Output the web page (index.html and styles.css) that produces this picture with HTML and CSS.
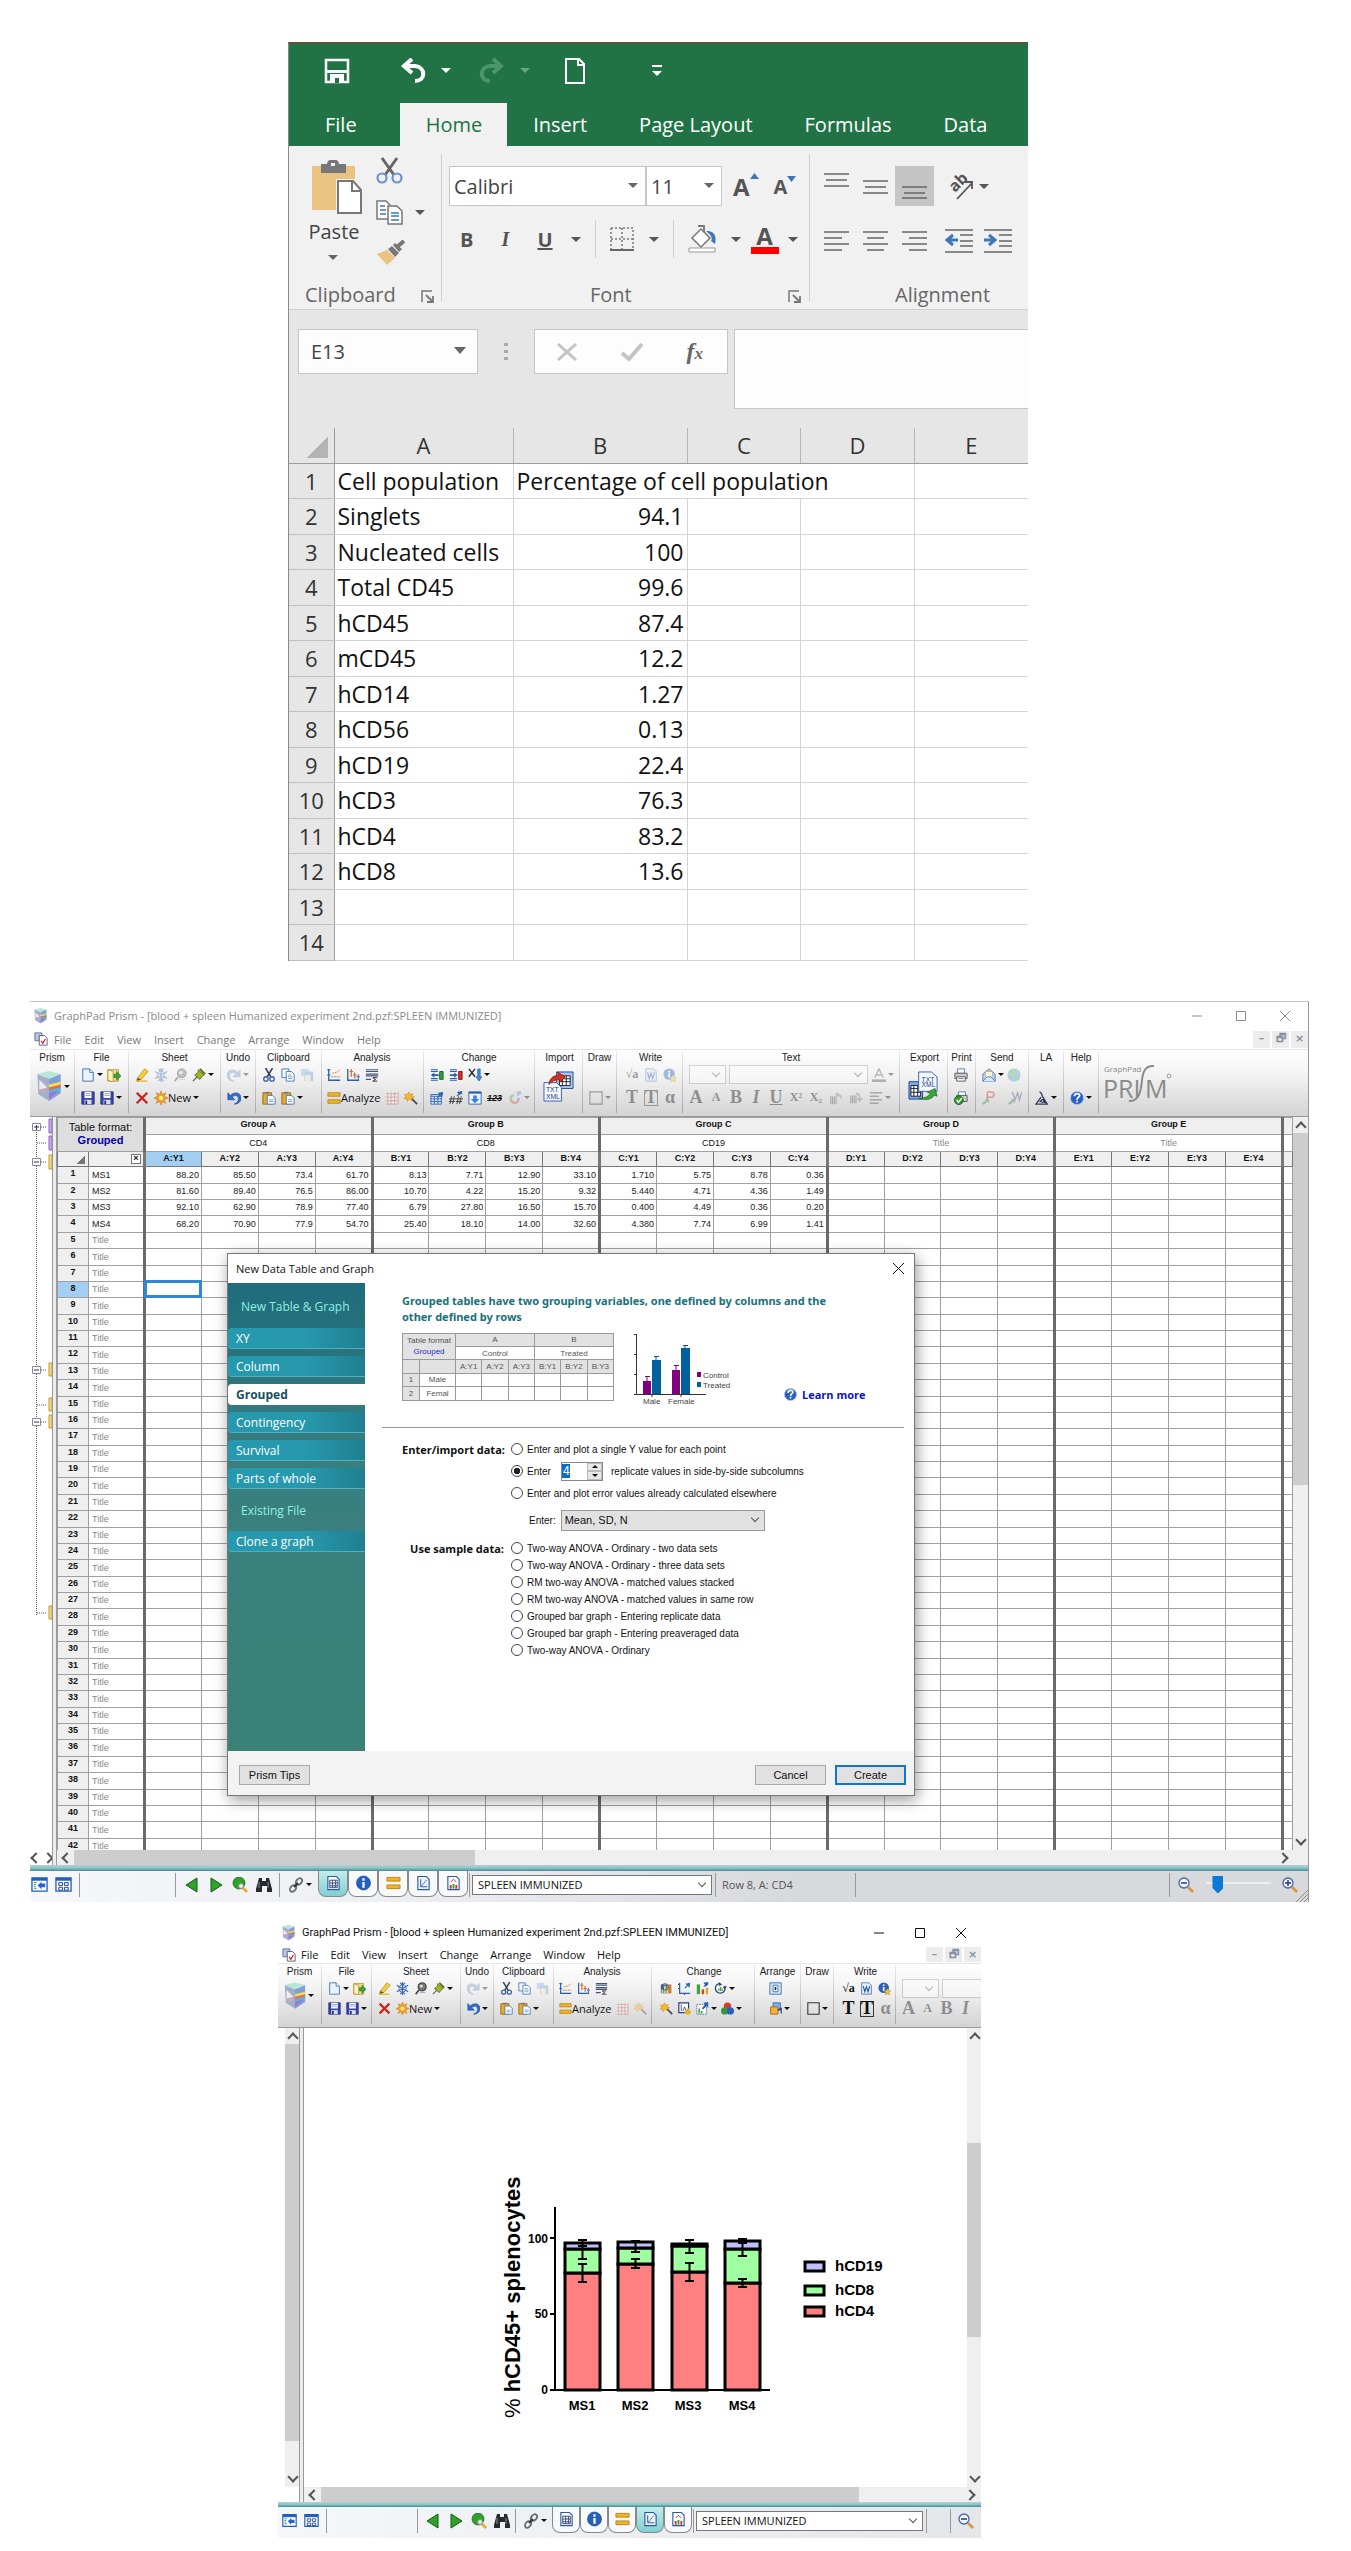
FILE: index.html
```html
<!DOCTYPE html>
<html lang="en">
<head>
  <meta charset="UTF-8"/>
  <meta name="viewport" content="width=device-width, initial-scale=1.0"/>
  <title>Cell populations – Excel and GraphPad Prism</title>
  <link rel="stylesheet" href="styles.css">
</head>
<body>
  <!-- Shared icons -->
  <svg class="sprite" aria-hidden="true">
    <symbol id="i-prism" viewBox="0 0 26 32"><path d="M1 3 13 8v23L2 24z" fill="#9fb0cc"/><path d="M13 8 25 3v20L13 31z" fill="#7fa0d8"/><path d="M1 3 13 0l12 3-12 5z" fill="#b9e6d6"/><path d="M13 14 25 11v4l-12 2z" fill="#f4e04a"/><path d="M13 17 25 14v4l-12 2z" fill="#e86a5a"/><path d="M13 20 25 17v3l-12 3z" fill="#3fc0e8"/><path d="m3 8 8 6-1 8-7 0z" fill="#c9a9b4"/><path d="m3 9 8 8-8 2z" fill="#e9eef6"/><path d="m13 23 10-3-10 9z" fill="#b06ad0"/></symbol>
    <symbol id="i-mdi" viewBox="0 0 16 16"><path d="M1 1h8v9H1z" fill="#b9c6dc" stroke="#5d6f95"/><path d="M6 4h6l3 3v8H6z" fill="#fff" stroke="#4a5878"/><path d="m8 10 2 3 3-5" fill="none" stroke="#d02020" stroke-width="1.5"/></symbol>
    <symbol id="i-doc" viewBox="0 0 16 16"><path d="M2 1h8l4 4v10H2z" fill="#e9f2fd" stroke="#3767ad"/><path d="M10 1v4h4" fill="#fff" stroke="#3767ad"/></symbol>
    <symbol id="i-open" viewBox="0 0 16 16"><path d="M1 2h12v13H1z" fill="#f6e39a" stroke="#b3922b"/><path d="m1 2 6 2v12l-6-2z" fill="#fff3c2" stroke="#b3922b"/><path d="M8 7h3V4l5 5-5 5v-3H8z" fill="#3da53a" stroke="#1c6a1c" stroke-width=".7"/></symbol>
    <symbol id="i-save" viewBox="0 0 16 16"><path d="M1 1h14v14H1z" fill="#3647a8" stroke="#1e2a78"/><path d="M4 1h8v7H4z" fill="#fff"/><path d="M5 3h6M5 5h6" stroke="#8a95c8"/><path d="M4 10h8v5H4z" fill="#d8dcee"/><path d="M5 11h2v4H5z" fill="#1e2a78"/></symbol>
    <symbol id="i-pencil" viewBox="0 0 16 16"><path d="m3 11 8-10 4 3-8 9-5 1z" fill="#f7cf3c" stroke="#a9811c" stroke-width=".8"/><path d="m3 11 4 2-5 2z" fill="#6b4a1a"/><path d="M1 15h13" stroke="#e8b41c" stroke-width="1.5"/></symbol>
    <symbol id="i-snow" viewBox="0 0 16 16"><path d="M8 0v16M1 4l14 8M1 12l14-8M5 1l3 3 3-3M5 15l3-3 3 3" fill="none" stroke="#3767ad" stroke-width="1.4"/><circle cx="8" cy="8" r="4.500" fill="none" stroke="#3767ad"/></symbol>
    <symbol id="i-lens" viewBox="0 0 16 16"><circle cx="10" cy="6" r="5" fill="#777" stroke="#222"/><circle cx="9" cy="5" r="2" fill="#ddd"/><path d="m6 10-4 5" stroke="#444" stroke-width="2"/><path d="M7 13h7" stroke="#7fa5d8"/></symbol>
    <symbol id="i-pin" viewBox="0 0 16 16"><path d="m7 2 7 6-2 1-3 4-6-5 4-3z" fill="#a4b428" stroke="#5d6812"/><path d="m9 1 6 6" stroke="#5d6812" stroke-width="2"/><path d="m6 10-5 5" stroke="#666" stroke-width="1.500"/></symbol>
    <symbol id="i-x" viewBox="0 0 16 16"><path d="m2 2 12 12M14 2 2 14" stroke="#c8281e" stroke-width="2.800"/></symbol>
    <symbol id="i-sun" viewBox="0 0 16 16"><path d="m8 0 1.500 4 4-2-2 4 4.500 2-4.500 2 2 4-4-2L8 16l-1.500-4-4 2 2-4L0 8l4.500-2-2-4 4 2z" fill="#f5a21c" stroke="#c26a10" stroke-width=".6"/><circle cx="8" cy="8" r="2.500" fill="#ffe98a"/></symbol>
    <symbol id="i-undo" viewBox="0 0 16 16"><path d="M1 2v8h8L6 7c3-3 7-2 7 2 0 3-2 5-5 6 5 0 8-3 8-7 0-6-7-8-12-3z" fill="#2f6fd0" stroke="#15408f" stroke-width=".7"/></symbol>
    <symbol id="i-redo" viewBox="0 0 16 16"><path d="M15 2v8H7l3-3C7 4 3 5 3 9c0 3 2 5 5 6-5 0-8-3-8-7 0-6 7-8 12-3z" fill="#7b9fc8" stroke="#54779c" stroke-width=".7"/></symbol>
    <symbol id="i-cut" viewBox="0 0 16 16"><path d="m4 0 6 10M12 0 6 10" stroke="#33435e" stroke-width="1.800"/><circle cx="4.500" cy="12.500" r="2.500" fill="none" stroke="#3c5f9e" stroke-width="1.500"/><circle cx="11.500" cy="12.500" r="2.500" fill="none" stroke="#3c5f9e" stroke-width="1.500"/></symbol>
    <symbol id="i-copy" viewBox="0 0 16 16"><path d="M1 1h8v10H1z" fill="#eef5fd" stroke="#3f73b8"/><path d="M6 4h6l3 3v8H6z" fill="#fff" stroke="#3f73b8"/><path d="M8 8h4M8 10h5M8 12h5" stroke="#6c9ad4"/></symbol>
    <symbol id="i-dup" viewBox="0 0 16 16"><path d="M1 1h9v8H1z" fill="#8fb8e8"/><path d="M5 4h10v11H5z" fill="#6fa3df"/><path d="M6 8h6v7H6z" fill="#f4e9b0"/></symbol>
    <symbol id="i-paste" viewBox="0 0 16 16"><path d="M1 2h10v13H1z" fill="#e8a92e" stroke="#93620f"/><path d="M4 1h4v2H4z" fill="#777"/><path d="M6 5h6l3 3v7H6z" fill="#fff" stroke="#3f73b8"/><path d="M8 10h5M8 12h5" stroke="#6c9ad4"/></symbol>
    <symbol id="i-an1" viewBox="0 0 16 16"><path d="M2 1v13h13" fill="none" stroke="#2b5fae" stroke-width="1.500"/><path d="M5 10h10M6 6l5-1 4-3" fill="none" stroke="#d06a28" stroke-dasharray="2 1"/><path d="M0 2h4M0 8h4" stroke="#2b5fae"/></symbol>
    <symbol id="i-an2" viewBox="0 0 16 16"><path d="M2 1v13h13" fill="none" stroke="#2b5fae" stroke-width="1.500"/><path d="M6 1v9M4 4h4M10 5v7M8 8h4" stroke="#d06a28" stroke-width="1.400"/><path d="M14 7v7M12 10h4" stroke="#2b5fae"/></symbol>
    <symbol id="i-an3" viewBox="0 0 16 16"><path d="M1 2h14M1 4h14M1 7h14M1 9h14M1 13h6" stroke="#45567c" stroke-width="1.400"/><path d="M14 11H9l3 2-3 2h5" fill="none" stroke="#222"/></symbol>
    <symbol id="i-eq" viewBox="0 0 16 16"><path d="M1 2h14v4H1zM1 10h14v4H1z" fill="#f3b51e" stroke="#a8720e" stroke-width=".8"/></symbol>
    <symbol id="i-grid" viewBox="0 0 16 16"><path d="M1 1h14v14H1z" fill="#fff"/><path d="M1 3h14M1 7h14M1 11h14M1 15h14M3 1v14M7 1v14M11 1v14M15 1v14" stroke="#c86a6a" stroke-width="1.300"/></symbol>
    <symbol id="i-wand" viewBox="0 0 16 16"><path d="m7 7 8 8" stroke="#445" stroke-width="2"/><path d="m6 1 1 3 3-1-1 3 3 1-3 1 0 3-3-2-2 3-1-3-3 0 2-3-2-2 3 0z" fill="#f6b62c" stroke="#bc7d12" stroke-width=".5"/></symbol>
    <symbol id="i-ins" viewBox="0 0 16 16"><path d="M1 2h8M1 4h8M1 12h8M1 14h8" stroke="#2b5fae" stroke-width="1.400"/><path d="m1 8 4-3v2h5v2H5v2z" fill="#2b5fae"/><path d="M11 4h4v9h-4z" fill="#2fa040" stroke="#135e20"/></symbol>
    <symbol id="i-del" viewBox="0 0 16 16"><path d="M1 2h8M1 4h8M1 12h8M1 14h8" stroke="#2b5fae" stroke-width="1.400"/><path d="m10 8-4-3v2H1v2h5v2z" fill="#2b5fae"/><path d="M11 4h4v9h-4z" fill="#d83030" stroke="#7d1010"/></symbol>
    <symbol id="i-sort" viewBox="0 0 16 16"><path d="m1 1 7 9M8 1l-7 9" stroke="#222" stroke-width="1.500"/><path d="M11 1h3v9h2l-3.500 5L9 10h2z" fill="#3d8ae0" stroke="#1c559e" stroke-width=".6"/></symbol>
    <symbol id="i-tbl" viewBox="0 0 16 16"><path d="M1 4h12v11H1z" fill="#dceafb" stroke="#2b5fae"/><path d="M1 6h12M1 9h12M1 12h12M5 6v9M9 6v9" stroke="#2b5fae"/><path d="M15 1 9 2l2 2-3 3 1 1 3-3 2 2z" fill="#2360b8"/></symbol>
    <symbol id="i-hash" viewBox="0 0 16 16"><path d="M3 6 1 15M6 6 4 15M0 9h8M0 12h7M11 6l-2 9M14 6l-2 9M8 9h8M8 12h7" stroke="#333"/><path d="M15 0 9 1l2 2-3 3 3-1 3-2 1 1z" fill="#2360b8"/></symbol>
    <symbol id="i-down" viewBox="0 0 16 16"><path d="M1 1h14v14H1z" fill="#eef5fd" stroke="#2b5fae"/><path d="M1 1h14v2H1z" fill="#2b5fae"/><path d="M6 5h4v4h3l-5 5-5-5h3z" fill="#3d7fe0"/></symbol>
    <symbol id="i-wheel" viewBox="0 0 16 16"><path d="M7 3a6 6 0 0 0-5 8l3-1a3 3 0 0 1 2-4z" fill="#58b060"/><path d="M2 11a6 6 0 0 0 10 2l-2-2a3 3 0 0 1-5-1z" fill="#e05a48"/><path d="M12 13a6 6 0 0 0 1-6l-3 1a3 3 0 0 1 0 3z" fill="#8068d0"/><path d="M15 0 9 1l2 2-2 3 3-1 3-2z" fill="#5b8ed0"/></symbol>
    <symbol id="i-import" viewBox="0 0 32 32"><path d="M14 1h17v17H14z" fill="#a9c8f4" stroke="#22489a"/><path d="M17 5h11v10H17z" fill="#fff" stroke="#223"/><path d="M17 8h11M17 11h11M20 5v10M24 5v10" stroke="#223"/><path d="M1 12h13l5 5v14H1z" fill="#f4f9ff" stroke="#3e5fb4"/><path d="M6 14C7 6 13 4 16 5l-1-4 8 5-6 6v-3c-4 0-7 1-11 5z" fill="#d8301c" stroke="#7c1408" stroke-width=".7"/><text x="3" y="22" class="tiny">TXT</text><text x="3" y="29" class="tiny">XML</text></symbol>
    <symbol id="i-export" viewBox="0 0 32 32"><path d="M1 11h14v18H1z" fill="#7ea6e4" stroke="#22489a"/><path d="M3 15h10v11H3z" fill="#fff" stroke="#223"/><path d="M3 18h10M3 22h10M6 15v11M10 15v11" stroke="#223"/><path d="M11 1h13l6 5v15H11z" fill="#f4f9ff" stroke="#3e5fb4"/><path d="M11 28c8 0 10-2 12-5l-3-1 8-4 2 8-3-1c-2 4-8 6-16 3z" fill="#3aa63a" stroke="#17641c" stroke-width=".7"/><text x="14" y="11" class="tiny">TXT</text><text x="14" y="17" class="tiny">XML</text></symbol>
    <symbol id="i-word" viewBox="0 0 16 16"><path d="M2 1h9l3 3v11H2z" fill="#e6f0fc" stroke="#3f73b8"/><path d="m4 5 2 7 2-6 2 6 2-7" fill="none" stroke="#2257ac" stroke-width="1.400"/></symbol>
    <symbol id="i-infoadd" viewBox="0 0 16 16"><circle cx="7" cy="7" r="6.500" fill="#2b62b8"/><path d="M7 6v5M7 3v2" stroke="#fff" stroke-width="2"/><path d="m12 8 1 2.500 2.500.5-2 2 .5 3-2.500-1.500L9 16l.500-3-2-2 2.500-.5z" fill="#f4c22c" stroke="#a8720e" stroke-width=".5"/></symbol>
    <symbol id="i-info" viewBox="0 0 16 16"><circle cx="8" cy="8" r="7.500" fill="#2460be" stroke="#153d80" stroke-width=".6"/><path d="M8 7v6M8 3v2.500" stroke="#fff" stroke-width="2.400"/></symbol>
    <symbol id="i-print" viewBox="0 0 16 16"><path d="M4 1h8v5H4z" fill="#fff" stroke="#4c72b0"/><path d="M1 6h14v6H1z" fill="#c9cbd0" stroke="#555"/><path d="M3 10h10v5H3z" fill="#f4f4f4" stroke="#555"/><path d="M5 12h6" stroke="#777"/></symbol>
    <symbol id="i-printok" viewBox="0 0 16 16"><path d="M5 1h8v5H5z" fill="#fff" stroke="#4c72b0"/><path d="M3 5h12v7H3z" fill="#c9cbd0" stroke="#555"/><circle cx="5.500" cy="10.500" r="5" fill="#2f9a30" stroke="#14601a"/><path d="m3 10 2 3 4-5" fill="none" stroke="#fff" stroke-width="1.600"/></symbol>
    <symbol id="i-mail" viewBox="0 0 16 16"><path d="M1 7 8 1l7 6v8H1z" fill="#bcd8f4" stroke="#3f73b8"/><path d="M4 4h8v6l-4 2-4-2z" fill="#fff6d8" stroke="#b49a50" stroke-width=".7"/><path d="m1 15 5-5h4l5 5" fill="#d8e9fa" stroke="#3f73b8"/></symbol>
    <symbol id="i-globe" viewBox="0 0 16 16"><circle cx="8" cy="8" r="7.500" fill="#4c9ed8"/><path d="M4 2c4-2 8 0 7 3l-4 2-2 4-3-2zM10 9l4-1-2 5-3 1z" fill="#5fb04c"/></symbol>
    <symbol id="i-ppt" viewBox="0 0 16 16"><path d="M6 1v10M6 1h4c5 0 5 6 0 6H6" fill="none" stroke="#c8463a" stroke-width="2"/><path d="M0 14 5 10l-2-1h5v5l-2-2-4 4z" fill="#3d8a4c"/></symbol>
    <symbol id="i-wsend" viewBox="0 0 16 16"><path d="m5 1 3 9 3-8 2 8 3-9" fill="none" stroke="#54699e" stroke-width="1.800"/><path d="M0 14 5 10l-2-1h5v5l-2-2-4 4z" fill="#3d8a4c"/></symbol>
    <symbol id="i-la" viewBox="0 0 16 16"><path d="M5 1c3 0 2 3 4 6l5 8H1l6-8M6 12l3-3 2 4z" fill="none" stroke="#333a5c" stroke-width="1.500"/></symbol>
    <symbol id="i-help" viewBox="0 0 16 16"><circle cx="8" cy="8" r="7.500" fill="#2a5fc4" stroke="#b4c8ea"/><path d="M5 6c0-4 6-4 6-1 0 2-3 2-3 5M8 11v2" fill="none" stroke="#fff" stroke-width="2"/></symbol>
    <symbol id="i-color" viewBox="0 0 16 16"><path d="m3 11 5-10 5 10M5 8h6" fill="none" stroke="#666" stroke-width="1.600"/><path d="M0 13h16v3H0z" fill="#555"/></symbol>
    <symbol id="i-rotl" viewBox="0 0 16 16"><path d="M2 6v9M4 6v9M6 6v9M8 6v9" stroke="#555" stroke-width="1.300"/><path d="M7 4l3-3v2c4 0 5 3 5 8-1-3-2-5-5-5v2z" fill="#888"/></symbol>
    <symbol id="i-rotr" viewBox="0 0 16 16"><path d="M2 5v9M4 5v9M6 5v9M8 5v9" stroke="#555" stroke-width="1.300"/><path d="M8 2c4 0 5 2 5 6h3l-4 5-3-5h2c0-3-1-4-3-4z" fill="#888"/></symbol>
    <symbol id="i-align" viewBox="0 0 16 16"><path d="M1 2h14M1 6h10M1 10h14M1 14h10" stroke="#555" stroke-width="1.600"/></symbol>
    <symbol id="i-box" viewBox="0 0 16 16"><path d="M1 1h14v14H1z" fill="none" stroke="#333" stroke-width="1.300"/></symbol>
    <symbol id="i-type" viewBox="0 0 16 16"><path d="M1 3h8v11H1z" fill="#4b6fa8"/><path d="M3 14V9M6 14V5M9 14V7" stroke="#d8e080" stroke-width="2"/><path d="M10 3h4v11h-4z" fill="#d07a3a"/><circle cx="6" cy="6" r="4" fill="none" stroke="#444"/></symbol>
    <symbol id="i-axes" viewBox="0 0 16 16"><path d="M2 1v13h13M0 3h2M0 8h2M8 14v2" fill="none" stroke="#2b5fae" stroke-width="1.500"/><path d="m15 1-6 1 2 2-3 3 1 1 3-3 2 2z" fill="#2360b8"/></symbol>
    <symbol id="i-bars" viewBox="0 0 16 16"><path d="M1 3h4v12H1z" fill="#3aa63a"/><path d="M7 9h3v6H7z" fill="#d8402c"/><path d="M12 7h3v8h-3z" fill="#f0a020"/><path d="m15 0-6 1 2 2-2 3 4-1 2-2z" fill="#2360b8"/></symbol>
    <symbol id="i-spin" viewBox="0 0 16 16"><path d="M6 2a6 6 0 1 0 7 3" fill="none" stroke="#27406f" stroke-width="1.500"/><path d="m6 0 4 3-4 2zM11 6l5-1-3 4z" fill="#27406f"/><path d="M6 11V8M8 11V6M10 11V8" stroke="#3aa63a" stroke-width="1.400"/></symbol>
    <symbol id="i-addgraph" viewBox="0 0 16 16"><path d="M1 1h12v12H1z" fill="#fff" stroke="#2b3f80" stroke-width="1.500"/><path d="M4 3v8M6 11l2-5 2 5" fill="none" stroke="#2b3f80"/><path d="M8 11h8v3H8zM10.500 8h3v8h-3z" fill="#e8b41c"/></symbol>
    <symbol id="i-pick" viewBox="0 0 16 16"><path d="M1 3h12v12H1z" fill="#fff" stroke="#2b5fae" stroke-dasharray="2 1"/><path d="M4 14V8M7 14v-3" stroke="#3aa63a" stroke-width="2"/><path d="m15 0-6 1 2 2-4 5 2 1 4-4 2 2z" fill="#2360b8"/></symbol>
    <symbol id="i-balls" viewBox="0 0 16 16"><circle cx="8" cy="5" r="4.500" fill="#d83a28"/><circle cx="4.500" cy="11" r="4.500" fill="#2f9a38"/><circle cx="11.500" cy="11" r="4.500" fill="#2f60c0"/></symbol>
    <symbol id="i-center" viewBox="0 0 16 16"><path d="M1 1h14v14H1z" fill="#d4e6fa" stroke="#2b5fae"/><path d="M5 4h6v8H5z" fill="#fff" stroke="#2b5fae"/><path d="M7 6h2v4H7z" fill="#222"/></symbol>
    <symbol id="i-order" viewBox="0 0 16 16"><path d="M5 1h9v9H5z" fill="#7fb0ee" stroke="#2b5fae"/><path d="M2 6h9v9H2z" fill="#f3b13a" stroke="#9a6410"/><path d="m11 10 4-2v6" fill="none" stroke="#27406f" stroke-width="1.500"/></symbol>
    <symbol id="i-nav1" viewBox="0 0 18 18"><path d="M1 2h16v14H1z" fill="#fff" stroke="#1f5fc0" stroke-width="1.400"/><path d="M1 2h16v3H1z" fill="#1f5fc0"/><path d="M3 7h3M3 9h2M3 11h2M3 13h3" stroke="#2f8a4a"/><path d="m7 10 4-4v2h4v4h-4v2z" fill="#2360d8"/></symbol>
    <symbol id="i-nav2" viewBox="0 0 18 18"><path d="M1 2h16v14H1z" fill="#fff" stroke="#1f5fc0" stroke-width="1.400"/><path d="M1 2h16v3H1z" fill="#1f5fc0"/><path d="M4 7h4v3H4zM10 7h4v3h-4zM4 12h4v3H4zM10 12h4v3h-4z" fill="none" stroke="#1f3f90"/></symbol>
    <symbol id="i-left" viewBox="0 0 16 16"><path d="M13 1v14L2 8z" fill="#2fa22a" stroke="#125c12"/></symbol>
    <symbol id="i-right" viewBox="0 0 16 16"><path d="M3 1v14l11-7z" fill="#2fa22a" stroke="#125c12"/></symbol>
    <symbol id="i-find" viewBox="0 0 16 16"><circle cx="7" cy="6" r="6" fill="#2fa22a" stroke="#125c12" stroke-width=".7"/><path d="m9 9 6 6" stroke="#e0b030" stroke-width="2.800"/><circle cx="9" cy="9" r="2.500" fill="#e6f2e0" stroke="#888"/></symbol>
    <symbol id="i-bino" viewBox="0 0 16 16"><path d="M3 1h3v3h4V1h3l3 11v3h-5V9H6v6H0v-3z" fill="#26292e"/><path d="M3 5v6M12 5v6" stroke="#8a9098"/></symbol>
    <symbol id="i-link" viewBox="0 0 16 16"><ellipse cx="11" cy="4.500" rx="2.600" ry="3.600" transform="rotate(40 11 4.500)" fill="none" stroke="#666b70" stroke-width="1.800"/><ellipse cx="5" cy="11.500" rx="2.600" ry="3.600" transform="rotate(40 5 11.500)" fill="none" stroke="#666b70" stroke-width="1.800"/><path d="m6 10 4-4" stroke="#333" stroke-width="2"/></symbol>
    <symbol id="i-sheet" viewBox="0 0 16 16"><path d="M2 1h9l3 3v11H2z" fill="#fff" stroke="#2d58a0" stroke-width="1.200"/><path d="M4 5h8M4 8h8M4 11h8M4 13h8M4 5v8M7 5v8M10 5v8M12 5v8" stroke="#3a4a78"/></symbol>
    <symbol id="i-graph" viewBox="0 0 16 16"><path d="M2 1h9l3 3v11H2z" fill="#e9f3fd" stroke="#2d58a0" stroke-width="1.200"/><path d="M5 4v8h7" fill="none" stroke="#2d58a0"/><path d="m6 11 5-6" stroke="#333" stroke-dasharray="2 1"/></symbol>
    <symbol id="i-layout" viewBox="0 0 16 16"><path d="M2 1h9l3 3v11H2z" fill="#fff" stroke="#2d58a0" stroke-width="1.200"/><path d="m5 7 3-3 3 3" fill="none" stroke="#c03030"/><path d="M5 14v-4M11 14v-4" stroke="#d83030" stroke-width="2"/><path d="M8 14V9" stroke="#2fa22a" stroke-width="2"/></symbol>
    <symbol id="i-zout" viewBox="0 0 16 16"><circle cx="6" cy="6" r="5" fill="#eef5fd" stroke="#4a64a4" stroke-width="1.300"/><path d="M3 6h6" stroke="#223a80" stroke-width="1.500"/><path d="m10 10 5 5" stroke="#d89a3c" stroke-width="2.800"/></symbol>
    <symbol id="i-zin" viewBox="0 0 16 16"><circle cx="6" cy="6" r="5" fill="#eef5fd" stroke="#4a64a4" stroke-width="1.300"/><path d="M3 6h6M6 3v6" stroke="#223a80" stroke-width="1.500"/><path d="m10 10 5 5" stroke="#d89a3c" stroke-width="2.800"/></symbol>
    <symbol id="i-launch" viewBox="0 0 14 14"><path d="M1 12V1h10" fill="none" stroke="#777" stroke-width="1.500"/><path d="m5 5 6 6M12 6v6H6" fill="none" stroke="#777" stroke-width="1.800"/></symbol>
  </svg>

  <!-- Excel -->
  <section class="excel">
    <header class="x-top">
      <div class="x-quick">
        <button aria-label="Save"><svg width="26" height="26" viewBox="0 0 26 26"><path d="M2 2h22v22H2z" fill="none" stroke="#fff" stroke-width="2.500"/><path d="M2 12h22v3H2z" fill="#fff"/><path d="M6 16h14v9H6z" fill="#fff"/><path d="M11 20h4v5h-4z" fill="#217346"/></svg></button>
        <button class="caret" aria-label="Undo"><svg width="26" height="26" viewBox="0 0 26 26"><path d="M12 1 4 8l8 7M4 8h11c11 1 11 15 0 15" fill="none" stroke="#fff" stroke-width="4"/></svg></button>
        <button class="caret faded" aria-label="Redo"><svg width="26" height="26" viewBox="0 0 26 26"><path d="m14 1 8 7-8 7M22 8H11C0 9 0 23 11 23" fill="none" stroke="#9fd4b5" stroke-width="4"/></svg></button>
        <button aria-label="New"><svg width="20" height="26" viewBox="0 0 20 26"><path d="M1 1h13l5 5v19H1z" fill="none" stroke="#fff" stroke-width="2"/><path d="M13 1v6h6" fill="none" stroke="#fff" stroke-width="2"/></svg></button>
        <button aria-label="Customize"><svg width="10" height="12" viewBox="0 0 10 12"><path d="M0 1h10" stroke="#fff" stroke-width="2"/><path d="M0 6h10l-5 5z" fill="#fff"/></svg></button>
      </div>
      <nav class="x-tabs">
        <a class="file" href="#">File</a>
        <a class="active" href="#">Home</a>
        <a href="#">Insert</a>
        <a href="#">Page Layout</a>
        <a href="#">Formulas</a>
        <a href="#">Data</a>
      </nav>
    </header>

    <div class="x-ribbon">
      <div class="x-group x-clip">
        <div class="x-tools">
          <button class="x-paste">
            <svg width="50" height="54" viewBox="0 0 50 54"><path d="M0 6h43v44H0z" fill="#eac282"/><path d="M9 4h6a6 5 0 0 1 12 0h7v9H9z" fill="#777"/><path d="M19 3h4v3h-4z" fill="#f1f1f1"/><path d="M24 19h20l6 10v25H24z" fill="#f1f1f1"/><path d="M26 21h15l8 9v23H26z" fill="#fff" stroke="#777" stroke-width="2"/><path d="M40 21v10h9" fill="none" stroke="#777" stroke-width="2"/></svg>
            <span>Paste</span>
          </button>
          <div class="x-side">
            <button aria-label="Cut"><svg width="27" height="28" viewBox="0 0 27 28"><path d="m6 1 12 17M21 1 9 18" stroke="#666" stroke-width="3"/><circle cx="6" cy="21" r="4.500" fill="none" stroke="#6d93cf" stroke-width="2.200"/><circle cx="21" cy="21" r="4.500" fill="none" stroke="#6d93cf" stroke-width="2.200"/></svg></button>
            <button class="caret" aria-label="Copy"><svg width="27" height="25" viewBox="0 0 27 25"><path d="M1 1h9l4 4v14H1z" fill="#fff" stroke="#777" stroke-width="1.500"/><path d="M12 6h9l5 5v13H12z" fill="#fff" stroke="#777" stroke-width="1.500"/><path d="M4 6h5M4 10h6M4 14h6M15 13h8M15 16h8M15 20h8" stroke="#3f77b6" stroke-width="1.500"/></svg></button>
            <button aria-label="Format Painter"><svg width="29" height="26" viewBox="0 0 29 26"><path d="m1 14 10-4 8 8-8 7z" fill="#eac282"/><path d="m12 9 4-3 7 7-4 4zM17 5l2-2 7 6-3 3z" fill="#777"/><path d="m22 6 6-5" stroke="#777" stroke-width="4"/></svg></button>
          </div>
        </div>
        <footer>Clipboard<svg class="launch"><use href="#i-launch"/></svg></footer>
      </div>

      <div class="x-group x-font">
        <div class="x-line">
          <label class="x-select name"><select aria-label="Font"><option>Calibri</option></select></label>
          <label class="x-select size"><select aria-label="Font size"><option>11</option></select></label>
          <button class="grow" aria-label="Increase font size">A<svg width="9" height="6"><path d="M0 6h9L4.500 0z" fill="#3f77b6"/></svg></button>
          <button class="grow small" aria-label="Decrease font size">A<svg width="9" height="6"><path d="M0 0h9L4.500 6z" fill="#3f77b6"/></svg></button>
        </div>
        <div class="x-line x-style">
          <button class="ltr">B</button>
          <button class="ltr it">I</button>
          <button class="ltr un caret">U</button>
          <i class="bar"></i>
          <button class="caret" aria-label="Borders"><svg width="24" height="24" viewBox="0 0 24 24"><path d="M1 1h22v21M1 1v21M12 1v21M1 12h22" fill="none" stroke="#777" stroke-width="1.500" stroke-dasharray="2 2"/><path d="M0 23h24" stroke="#666" stroke-width="2"/></svg></button>
          <i class="bar"></i>
          <button class="caret" aria-label="Fill color"><svg width="28" height="28" viewBox="0 0 28 28"><path d="M10 1h6v9" fill="none" stroke="#777" stroke-width="1.800"/><path d="m13 4 9 9-9 9-9-9z" fill="#fff" stroke="#777" stroke-width="1.500"/><path d="M18 6c8-1 11 5 9 13l-4-3c2-3 0-6-5-10z" fill="#3f77b6"/><path d="M1 23h26v4H1z" fill="#fff" stroke="#999"/></svg></button>
          <button class="fc caret" aria-label="Font color"><span>A</span></button>
        </div>
        <footer>Font<svg class="launch"><use href="#i-launch"/></svg></footer>
      </div>

      <div class="x-group x-align">
        <div class="x-line">
          <button aria-label="Top align"><svg width="25" height="26" viewBox="0 0 25 26"><path d="M0 1h25M2 7h21M0 13h25" stroke="#666" stroke-width="1.500"/></svg></button>
          <button aria-label="Middle align"><svg width="25" height="26" viewBox="0 0 25 26"><path d="M0 8h25M2 14h21M0 20h25" stroke="#666" stroke-width="1.500"/></svg></button>
          <button class="on" aria-label="Bottom align"><svg width="25" height="26" viewBox="0 0 25 26"><path d="M0 14h25M2 20h21M0 25h25" stroke="#666" stroke-width="1.500"/></svg></button>
          <button class="caret" aria-label="Orientation"><svg width="28" height="28" viewBox="0 0 28 28"><text x="0" y="0" transform="translate(10 21) rotate(-45)" class="ab">ab</text><path d="M12 27 27 11M20 10h7v7" fill="none" stroke="#555" stroke-width="1.800"/></svg></button>
        </div>
        <div class="x-line">
          <button aria-label="Align left"><svg width="25" height="20" viewBox="0 0 25 20"><path d="M0 1h25M0 7h18M0 13h25M0 19h18" stroke="#666" stroke-width="1.500"/></svg></button>
          <button aria-label="Center"><svg width="25" height="20" viewBox="0 0 25 20"><path d="M0 1h25M4 7h17M0 13h25M4 19h17" stroke="#666" stroke-width="1.500"/></svg></button>
          <button aria-label="Align right"><svg width="25" height="20" viewBox="0 0 25 20"><path d="M0 1h25M7 7h18M0 13h25M7 19h18" stroke="#666" stroke-width="1.500"/></svg></button>
          <button aria-label="Decrease indent"><svg width="28" height="24" viewBox="0 0 28 24"><path d="M0 1h28M15 6h13M15 12h13M15 17h13M0 23h28" stroke="#666" stroke-width="1.500"/><path d="M13 11H3M8 6l-6 5 6 5" fill="none" stroke="#3f77b6" stroke-width="3"/></svg></button>
          <button aria-label="Increase indent"><svg width="28" height="24" viewBox="0 0 28 24"><path d="M0 1h28M15 6h13M15 12h13M15 17h13M0 23h28" stroke="#666" stroke-width="1.500"/><path d="M0 11h10M5 6l6 5-6 5" fill="none" stroke="#3f77b6" stroke-width="3"/></svg></button>
        </div>
        <footer>Alignment</footer>
      </div>
    </div>

    <div class="x-formula">
      <label class="x-name"><input value="E13" aria-label="Name box"></label>
      <svg class="dots" width="4" height="18"><path d="M0 0h4v3H0zM0 7h4v3H0zM0 14h4v3H0z" fill="#aaa"/></svg>
      <div class="x-fx">
        <button aria-label="Cancel"><svg width="20" height="18" viewBox="0 0 20 18"><path d="m1 1 18 16M19 1 1 17" stroke="#c4c4c4" stroke-width="3"/></svg></button>
        <button aria-label="Enter"><svg width="24" height="20" viewBox="0 0 24 20"><path d="m2 11 7 6L22 2" fill="none" stroke="#c4c4c4" stroke-width="4"/></svg></button>
        <button class="fx">f<sub>x</sub></button>
      </div>
      <textarea aria-label="Formula bar"></textarea>
    </div>

    <table class="x-sheet">
      <thead>
        <tr><th class="corner"></th><th>A</th><th>B</th><th>C</th><th>D</th><th>E</th></tr>
      </thead>
      <tbody id="excelRows"></tbody>
    </table>
  </section>

  <!-- Prism, data table -->
  <section class="prism sheetwin">
    <header class="p-title">
      <svg class="logo"><use href="#i-prism"/></svg>
      <span>GraphPad Prism - [blood + spleen Humanized experiment 2nd.pzf:SPLEEN IMMUNIZED]</span>
      <div class="winctl">
        <button aria-label="Minimize"><svg width="10" height="10"><path d="M0 5h10" stroke="currentColor"/></svg></button>
        <button aria-label="Maximize"><svg width="10" height="10"><path d="M.5.5h9v9h-9z" fill="none" stroke="currentColor"/></svg></button>
        <button aria-label="Close"><svg width="10" height="10"><path d="m0 0 10 10M10 0 0 10" stroke="currentColor"/></svg></button>
      </div>
    </header>
    <nav class="p-menu">
      <svg class="logo"><use href="#i-mdi"/></svg>
      <a href="#">File</a><a href="#">Edit</a><a href="#">View</a><a href="#">Insert</a><a href="#">Change</a><a href="#">Arrange</a><a href="#">Window</a><a href="#">Help</a>
      <div class="mdi"><button>–</button><button>🗗</button><button>×</button></div>
    </nav>

    <div class="p-bar">
      <div class="g g-prism"><h4>Prism</h4><button class="big drop" aria-label="Prism"><svg><use href="#i-prism"/></svg></button></div>
      <div class="g g-file"><h4>File</h4>
        <div class="r"><button class="tb drop"><svg><use href="#i-doc"/></svg></button><button class="tb"><svg><use href="#i-open"/></svg></button></div>
        <div class="r"><button class="tb"><svg><use href="#i-save"/></svg></button><button class="tb drop"><svg><use href="#i-save"/></svg></button></div>
      </div>
      <div class="g g-sheet"><h4>Sheet</h4>
        <div class="r"><button class="tb"><svg><use href="#i-pencil"/></svg></button><button class="tb off"><svg><use href="#i-snow"/></svg></button><button class="tb off"><svg><use href="#i-lens"/></svg></button><button class="tb drop"><svg><use href="#i-pin"/></svg></button></div>
        <div class="r"><button class="tb"><svg><use href="#i-x"/></svg></button><button class="tb drop"><svg><use href="#i-sun"/></svg>New</button></div>
      </div>
      <div class="g g-undo"><h4>Undo</h4>
        <div class="r"><button class="tb drop off"><svg><use href="#i-redo"/></svg></button></div>
        <div class="r"><button class="tb drop"><svg><use href="#i-undo"/></svg></button></div>
      </div>
      <div class="g g-clip"><h4>Clipboard</h4>
        <div class="r"><button class="tb"><svg><use href="#i-cut"/></svg></button><button class="tb"><svg><use href="#i-copy"/></svg></button><button class="tb off"><svg><use href="#i-dup"/></svg></button></div>
        <div class="r"><button class="tb"><svg><use href="#i-paste"/></svg></button><button class="tb drop"><svg><use href="#i-paste"/></svg></button></div>
      </div>
      <div class="g g-ana"><h4>Analysis</h4>
        <div class="r"><button class="tb"><svg><use href="#i-an1"/></svg></button><button class="tb"><svg><use href="#i-an2"/></svg></button><button class="tb"><svg><use href="#i-an3"/></svg></button></div>
        <div class="r"><button class="tb"><svg><use href="#i-eq"/></svg>Analyze</button><button class="tb off"><svg><use href="#i-grid"/></svg></button><button class="tb"><svg><use href="#i-wand"/></svg></button></div>
      </div>
      <div class="g g-change"><h4>Change</h4>
        <div class="r"><button class="tb"><svg><use href="#i-ins"/></svg></button><button class="tb"><svg><use href="#i-del"/></svg></button><button class="tb drop"><svg><use href="#i-sort"/></svg></button></div>
        <div class="r"><button class="tb"><svg><use href="#i-tbl"/></svg></button><button class="tb"><svg><use href="#i-hash"/></svg></button><button class="tb"><svg><use href="#i-down"/></svg></button><button class="tb num">123</button><button class="tb drop off"><svg><use href="#i-wheel"/></svg></button></div>
      </div>
      <div class="g g-import"><h4>Import</h4><button class="big" aria-label="Import"><svg><use href="#i-import"/></svg></button></div>
      <div class="g g-draw"><h4>Draw</h4>
        <div class="r"></div>
        <div class="r"><button class="tb drop off"><svg><use href="#i-box"/></svg></button></div>
      </div>
      <div class="g g-write off-in"><h4>Write</h4>
        <div class="r"><button class="tb ser">√a</button><button class="tb"><svg><use href="#i-word"/></svg></button><button class="tb"><svg><use href="#i-infoadd"/></svg></button></div>
        <div class="r"><button class="tb ser tt">T</button><button class="tb ser tt boxed">T</button><button class="tb ser tt">α</button></div>
      </div>
      <div class="g g-text off-in"><h4>Text</h4>
        <div class="r"><label class="cmb s"><select disabled aria-label="Size"><option></option></select></label><label class="cmb"><select disabled aria-label="Font"><option></option></select></label><button class="tb drop"><svg><use href="#i-color"/></svg></button></div>
        <div class="r"><button class="tb ser tt">A</button><button class="tb ser">A</button><button class="tb ser tt">B</button><button class="tb ser tt ital">I</button><button class="tb ser tt under">U</button><button class="tb ser">X²</button><button class="tb ser">X₂</button><button class="tb"><svg><use href="#i-rotl"/></svg></button><button class="tb"><svg><use href="#i-rotr"/></svg></button><button class="tb drop"><svg><use href="#i-align"/></svg></button></div>
      </div>
      <div class="g g-import"><h4>Export</h4><button class="big" aria-label="Export"><svg><use href="#i-export"/></svg></button></div>
      <div class="g g-print"><h4>Print</h4>
        <div class="r"><button class="tb"><svg><use href="#i-print"/></svg></button></div>
        <div class="r"><button class="tb"><svg><use href="#i-printok"/></svg></button></div>
      </div>
      <div class="g g-send"><h4>Send</h4>
        <div class="r"><button class="tb drop"><svg><use href="#i-mail"/></svg></button><button class="tb off"><svg><use href="#i-globe"/></svg></button></div>
        <div class="r spread"><button class="tb off"><svg><use href="#i-ppt"/></svg></button><button class="tb off"><svg><use href="#i-wsend"/></svg></button></div>
      </div>
      <div class="g g-undo"><h4>LA</h4>
        <div class="r"></div>
        <div class="r"><button class="tb drop"><svg><use href="#i-la"/></svg></button></div>
      </div>
      <div class="g g-undo"><h4>Help</h4>
        <div class="r"></div>
        <div class="r"><button class="tb drop"><svg><use href="#i-help"/></svg></button></div>
      </div>
      <svg class="brand" width="70" height="44" viewBox="0 0 70 44"><text x="1" y="9" class="b1">GraphPad</text><text x="0" y="35" class="b2">PRI</text><path d="M51 3c-8-1-11 5-12 14s-2 22-13 21" fill="none" stroke="#8a8a8a" stroke-width="2"/><text x="42" y="35" class="b2">M</text><circle cx="66" cy="13" r="2" fill="none" stroke="#999"/></svg>
    </div>

    <div class="p-body">
      <svg class="tree" width="22" height="732" viewBox="0 0 22 732">
        <path d="M6.500 15v483M7 10h10M7 26h10M7 45h10M7 253h10M7 288h10M7 305h10M7 496h10" stroke="#555" stroke-dasharray="1 1" fill="none"/>
        <path d="M19 2h3v14h-3zM19 19h3v14h-3z" fill="#c9a8ee" stroke="#8d62c4"/>
        <path d="M19 38h3v14h-3zM19 246h3v13h-3zM19 281h3v13h-3zM19 298h3v13h-3zM19 489h3v13h-3z" fill="#f3dc84" stroke="#b9992f"/>
        <path d="M2.500 6.500h8v7h-8zM2.500 41.500h8v7h-8zM2.500 249.500h8v7h-8zM2.500 301.500h8v7h-8z" fill="#fff" stroke="#889"/>
        <path d="M4 10h5M6.500 8v5M4 45h5M4 253h5M4 305h5" stroke="#336"/>
      </svg>
      <div class="split"></div>
      <div class="grid">
        <table class="p-sheet">
          <colgroup id="prismCols"></colgroup>
          <thead id="prismHead"></thead>
          <tbody id="prismRows"></tbody>
        </table>
      </div>
      <div class="vs"><i class="a up"></i><i class="th"></i><i class="a dn"></i></div>

      <!-- Dialog -->
      <div class="dlg" role="dialog" aria-label="New Data Table and Graph">
        <header>New Data Table and Graph<button aria-label="Close"><svg width="11" height="11"><path d="m0 0 11 11M11 0 0 11" stroke="#111"/></svg></button></header>
        <div class="dlg-mid">
          <nav class="side">
            <h5>New Table &amp; Graph</h5>
            <a href="#">XY</a><a href="#">Column</a><a class="sel" href="#">Grouped</a><a href="#">Contingency</a><a href="#">Survival</a><a href="#">Parts of whole</a>
            <h5 class="low">Existing File</h5>
            <a href="#">Clone a graph</a>
          </nav>
          <div class="dlg-main">
            <h3>Grouped tables have two grouping variables, one defined by columns and the other defined by rows</h3>
            <div class="demo">
              <table class="mini">
                <colgroup><col class="c1"><col class="c2"><col><col><col><col><col><col></colgroup>
                <tr><td class="tf" colspan="2" rowspan="2">Table format<br><b>Grouped</b></td><td class="h" colspan="3">A</td><td class="h" colspan="3">B</td></tr>
                <tr><td colspan="3">Control</td><td colspan="3">Treated</td></tr>
                <tr class="h"><td></td><td></td><td>A:Y1</td><td>A:Y2</td><td>A:Y3</td><td>B:Y1</td><td>B:Y2</td><td>B:Y3</td></tr>
                <tr><td class="h">1</td><td>Male</td><td></td><td></td><td></td><td></td><td></td><td></td></tr>
                <tr><td class="h">2</td><td>Femal</td><td></td><td></td><td></td><td></td><td></td><td></td></tr>
              </table>
              <svg class="minichart" width="104" height="74" viewBox="0 0 104 74">
                <path d="M4.500 1v61M2 1.500h3M2 21.500h3M2 41.500h3M2 61.500h72M20 61v3M49 61v3" fill="none" stroke="#333"/>
                <path d="M15 48v-5M13 43.500h5M44 37v-5M42 32.500h5" stroke="#800080"/>
                <path d="M24 28v-5M22 23.500h5M53 15v-3M51 12.500h5" stroke="#0b5394"/>
                <path d="M11 48h8v13h-8zM40 37h8v24h-8zM65 39h4v5h-4z" fill="#800080"/>
                <path d="M20 27h9v34h-9zM49 15h9v46h-9zM65 49h4v5h-4z" fill="#0060a0"/>
                <text x="71" y="45">Control</text><text x="71" y="55">Treated</text>
                <text x="11" y="71">Male</text><text x="36" y="71">Female</text>
              </svg>
              <a class="more" href="#"><svg width="13" height="13"><use href="#i-help"/></svg>Learn more</a>
            </div>
            <hr>
            <form class="opts">
              <b>Enter/import data:</b>
              <div class="ol wide">
                <label><input type="radio" name="m"> Enter and plot a single Y value for each point</label>
                <div class="rep"><label><input type="radio" name="m" checked> Enter</label>
                  <span class="spin"><input value="4" aria-label="Replicates"><span><button type="button" aria-label="More"></button><button type="button" class="d" aria-label="Less"></button></span></span>
                  <span>replicate values in side-by-side subcolumns</span></div>
                <label><input type="radio" name="m"> Enter and plot error values already calculated elsewhere</label>
                <label class="enter">Enter:<span class="cmb dd"><select><option>Mean, SD, N</option></select></span></label>
              </div>
              <b>Use sample data:</b>
              <div class="ol">
                <label><input type="radio" name="m"> Two-way ANOVA - Ordinary - two data sets</label>
                <label><input type="radio" name="m"> Two-way ANOVA - Ordinary - three data sets</label>
                <label><input type="radio" name="m"> RM two-way ANOVA - matched values stacked</label>
                <label><input type="radio" name="m"> RM two-way ANOVA - matched values in same row</label>
                <label><input type="radio" name="m"> Grouped bar graph - Entering replicate data</label>
                <label><input type="radio" name="m"> Grouped bar graph - Entering preaveraged data</label>
                <label><input type="radio" name="m"> Two-way ANOVA - Ordinary</label>
              </div>
            </form>
          </div>
        </div>
        <footer><button>Prism Tips</button><span></span><button>Cancel</button><button class="ok">Create</button></footer>
      </div>
    </div>
    <div class="hs"><div class="mini-hs"><i class="a lf"></i><i class="a rt"></i></div><div class="split"></div><i class="a lf"></i><i class="th"></i><span></span><i class="a rt"></i></div>
    <div class="teal"></div>
    <footer class="p-status">
      <button class="st"><svg><use href="#i-nav1"/></svg></button><button class="st"><svg><use href="#i-nav2"/></svg></button>
      <i class="v"></i><span class="blank"></span><i class="v"></i>
      <button class="sn"><svg><use href="#i-left"/></svg></button><button class="sn"><svg><use href="#i-right"/></svg></button><button class="sn"><svg><use href="#i-find"/></svg></button><button class="sn"><svg><use href="#i-bino"/></svg></button>
      <i class="v"></i>
      <button class="sn drop lk"><svg><use href="#i-link"/></svg></button>
      <div class="tabs"><button class="on"><svg><use href="#i-sheet"/></svg></button><button><svg><use href="#i-info"/></svg></button><button><svg><use href="#i-eq"/></svg></button><button><svg><use href="#i-graph"/></svg></button><button><svg><use href="#i-layout"/></svg></button></div>
      <i class="v"></i>
      <label class="cmb sheet"><select aria-label="Sheet"><option>SPLEEN IMMUNIZED</option></select></label>
      <i class="v"></i>
      <span class="where">Row 8, A: CD4</span>
      <i class="v"></i><span class="fill"></span><i class="v"></i>
      <button class="sn"><svg><use href="#i-zout"/></svg></button>
      <input type="range" min="0" max="100" value="12" aria-label="Zoom">
      <button class="sn"><svg><use href="#i-zin"/></svg></button>
      <svg class="grip" width="12" height="12"><path d="M0 12 12 0M4 12l8-8M8 12l4-4" stroke="#888"/></svg>
    </footer>
  </section>

  <!-- Prism, graph -->
  <section class="prism graphwin">
    <header class="p-title">
      <svg class="logo"><use href="#i-prism"/></svg>
      <span>GraphPad Prism - [blood + spleen Humanized experiment 2nd.pzf:SPLEEN IMMUNIZED]</span>
      <div class="winctl">
        <button aria-label="Minimize"><svg width="10" height="10"><path d="M0 5h10" stroke="currentColor"/></svg></button>
        <button aria-label="Maximize"><svg width="10" height="10"><path d="M.5.5h9v9h-9z" fill="none" stroke="currentColor"/></svg></button>
        <button aria-label="Close"><svg width="10" height="10"><path d="m0 0 10 10M10 0 0 10" stroke="currentColor"/></svg></button>
      </div>
    </header>
    <nav class="p-menu">
      <svg class="logo"><use href="#i-mdi"/></svg>
      <a href="#">File</a><a href="#">Edit</a><a href="#">View</a><a href="#">Insert</a><a href="#">Change</a><a href="#">Arrange</a><a href="#">Window</a><a href="#">Help</a>
      <div class="mdi"><button>–</button><button>🗗</button><button>×</button></div>
    </nav>

    <div class="p-bar">
      <div class="g g-prism"><h4>Prism</h4><button class="big drop" aria-label="Prism"><svg><use href="#i-prism"/></svg></button></div>
      <div class="g g-file"><h4>File</h4>
        <div class="r"><button class="tb drop"><svg><use href="#i-doc"/></svg></button><button class="tb"><svg><use href="#i-open"/></svg></button></div>
        <div class="r"><button class="tb"><svg><use href="#i-save"/></svg></button><button class="tb drop"><svg><use href="#i-save"/></svg></button></div>
      </div>
      <div class="g g-sheet"><h4>Sheet</h4>
        <div class="r"><button class="tb"><svg><use href="#i-pencil"/></svg></button><button class="tb"><svg><use href="#i-snow"/></svg></button><button class="tb"><svg><use href="#i-lens"/></svg></button><button class="tb drop"><svg><use href="#i-pin"/></svg></button></div>
        <div class="r"><button class="tb"><svg><use href="#i-x"/></svg></button><button class="tb drop"><svg><use href="#i-sun"/></svg>New</button></div>
      </div>
      <div class="g g-undo"><h4>Undo</h4>
        <div class="r"><button class="tb drop off"><svg><use href="#i-redo"/></svg></button></div>
        <div class="r"><button class="tb drop"><svg><use href="#i-undo"/></svg></button></div>
      </div>
      <div class="g g-clip"><h4>Clipboard</h4>
        <div class="r"><button class="tb"><svg><use href="#i-cut"/></svg></button><button class="tb"><svg><use href="#i-copy"/></svg></button><button class="tb off"><svg><use href="#i-dup"/></svg></button></div>
        <div class="r"><button class="tb"><svg><use href="#i-paste"/></svg></button><button class="tb drop"><svg><use href="#i-paste"/></svg></button></div>
      </div>
      <div class="g g-ana"><h4>Analysis</h4>
        <div class="r"><button class="tb"><svg><use href="#i-an1"/></svg></button><button class="tb"><svg><use href="#i-an2"/></svg></button><button class="tb"><svg><use href="#i-an3"/></svg></button></div>
        <div class="r"><button class="tb"><svg><use href="#i-eq"/></svg>Analyze</button><button class="tb off"><svg><use href="#i-grid"/></svg></button><button class="tb off"><svg><use href="#i-wand"/></svg></button></div>
      </div>
      <div class="g g-change"><h4>Change</h4>
        <div class="r"><button class="tb"><svg><use href="#i-type"/></svg></button><button class="tb"><svg><use href="#i-axes"/></svg></button><button class="tb"><svg><use href="#i-bars"/></svg></button><button class="tb drop"><svg><use href="#i-spin"/></svg></button></div>
        <div class="r"><button class="tb"><svg><use href="#i-wand"/></svg></button><button class="tb"><svg><use href="#i-addgraph"/></svg></button><button class="tb drop"><svg><use href="#i-pick"/></svg></button><button class="tb drop"><svg><use href="#i-balls"/></svg></button></div>
      </div>
      <div class="g g-arr"><h4>Arrange</h4>
        <div class="r"><button class="tb"><svg><use href="#i-center"/></svg></button></div>
        <div class="r"><button class="tb drop"><svg><use href="#i-order"/></svg></button></div>
      </div>
      <div class="g g-draw"><h4>Draw</h4>
        <div class="r"></div>
        <div class="r"><button class="tb drop"><svg><use href="#i-box"/></svg></button></div>
      </div>
      <div class="g g-write"><h4>Write</h4>
        <div class="r"><button class="tb ser">√a</button><button class="tb"><svg><use href="#i-word"/></svg></button><button class="tb"><svg><use href="#i-infoadd"/></svg></button></div>
        <div class="r"><button class="tb ser tt">T</button><button class="tb ser tt boxed">T</button><button class="tb ser tt off">α</button></div>
      </div>
      <div class="g g-text off-in"><h4>&nbsp;</h4>
        <div class="r"><label class="cmb s"><select disabled aria-label="Size"><option></option></select></label><label class="cmb"><select disabled aria-label="Font"><option></option></select></label></div>
        <div class="r"><button class="tb ser tt">A</button><button class="tb ser">A</button><button class="tb ser tt">B</button><button class="tb ser tt ital">I</button></div>
      </div>
    </div>

    <div class="p-body">
      <div class="stub"></div>
      <div class="vs left"><i class="a up"></i><i class="th"></i><i class="a dn"></i></div>
      <div class="split"></div>
      <div class="canvas">
        <svg class="chart" width="400" height="260" viewBox="0 0 400 260">
          <text class="ttl" transform="translate(27 249) rotate(-90)"><tspan class="pc">%</tspan> hCD45+ splenocytes</text>
          <path d="M62 38v184M57 221h220M57 69h5M57 145h5" fill="none" stroke="#000" stroke-width="2"/>
          <g class="num"><text x="55" y="74">100</text><text x="55" y="149">50</text><text x="55" y="225">0</text></g>
          <g stroke="#000" stroke-width="3">
            <path d="M72 104h35v117H72zM125 95h35v126h-35zM179 103h35v118h-35zM232 114h35v107h-35z" fill="#ff8080"/>
            <path d="M72 80h35v24H72zM125 79h35v16h-35zM179 77h35v26h-35zM232 80h35v34h-35z" fill="#a0ffa0"/>
            <path d="M72 74h35v6H72zM125 73h35v6h-35zM179 75h35v2h-35zM232 72h35v8h-35z" fill="#c0c0ff"/>
          </g>
          <path d="M89.500 95v18M85 95h9M85 113h9M89.500 71v19M85 71h9M85 77h9M85 90h9M142.500 90v9M138 90h9M138 99h9M142.500 72v11M138 72h9M138 83h9M196.500 94v18M192 94h9M192 112h9M196.500 71v13M192 71h9M192 84h9M249.500 110v8M245 110h9M245 118h9M249.500 70v17M245 70h9M245 74h9M245 87h9" fill="none" stroke="#000" stroke-width="2"/>
          <g class="cat"><text x="89" y="241">MS1</text><text x="142" y="241">MS2</text><text x="195" y="241">MS3</text><text x="249" y="241">MS4</text></g>
          <g stroke="#000" stroke-width="3"><path d="M312 93h19v9h-19z" fill="#c0c0ff"/><path d="M312 117h19v9h-19z" fill="#a0ffa0"/><path d="M312 138h19v9h-19z" fill="#ff8080"/></g>
          <g class="leg"><text x="342" y="102">hCD19</text><text x="342" y="126">hCD8</text><text x="342" y="147">hCD4</text></g>
        </svg>
      </div>
      <div class="vs"><i class="a up"></i><i class="th"></i><i class="a dn"></i></div>
    </div>
    <div class="hs"><div class="mini-hs"></div><div class="split"></div><i class="a lf"></i><i class="th"></i><span></span><i class="a rt"></i></div>
    <div class="teal"></div>
    <footer class="p-status">
      <button class="st"><svg><use href="#i-nav1"/></svg></button><button class="st"><svg><use href="#i-nav2"/></svg></button>
      <i class="v"></i><span class="blank"></span><i class="v"></i>
      <button class="sn"><svg><use href="#i-left"/></svg></button><button class="sn"><svg><use href="#i-right"/></svg></button><button class="sn"><svg><use href="#i-find"/></svg></button><button class="sn"><svg><use href="#i-bino"/></svg></button>
      <i class="v"></i>
      <button class="sn drop lk"><svg><use href="#i-link"/></svg></button>
      <div class="tabs"><button><svg><use href="#i-sheet"/></svg></button><button><svg><use href="#i-info"/></svg></button><button><svg><use href="#i-eq"/></svg></button><button class="on"><svg><use href="#i-graph"/></svg></button><button><svg><use href="#i-layout"/></svg></button></div>
      <i class="v"></i>
      <label class="cmb sheet"><select aria-label="Sheet"><option>SPLEEN IMMUNIZED</option></select></label>
      <i class="v"></i><span class="fill"></span><i class="v"></i>
      <button class="sn"><svg><use href="#i-zout"/></svg></button>
      <button class="sn"><svg><use href="#i-zin"/></svg></button>
    </footer>
  </section>

  <script src="script.js"></script>
</body>
</html>
```

FILE: styles.css
```css
body {
  margin: 0;
  background: #fff;
  font-family: "Open Sans", "Noto Sans", sans-serif;
  overflow-x: hidden;
}
* { box-sizing: border-box; }
button {
  border: 0;
  padding: 0;
  background: none;
  font: inherit;
  color: inherit;
}
a { color: inherit; text-decoration: none; }
select, input, textarea { font: inherit; color: inherit; }
svg { display: block; flex-shrink: 0; }
i { font-style: normal; }
.sprite { display: none; }
.tiny { font: 7px "Liberation Sans", sans-serif; fill: #223a80; }

/* ---------- Excel ---------- */
.excel {
  max-width: 740px;
  margin: 42px 0 0 288px;
  border-left: 1px solid #8a8a8a;
  border-top: 2px solid #5b5238;
  background: #e6e6e6;
  overflow: hidden;
}
.x-top { background: #217346; color: #fff; }
.x-quick {
  display: flex;
  align-items: center;
  height: 59px;
  padding: 0 0 6px 35px;
}
.x-quick button:nth-child(2) { margin-left: 50px; }
.x-quick button:nth-child(3) { margin-left: 28px; }
.x-quick button:nth-child(4) { margin-left: 35px; }
.x-quick button:nth-child(5) { margin-left: 67px; }
.caret { display: flex; align-items: center; }
.caret::after {
  content: "";
  margin-left: 15px;
  border: 5px solid transparent;
  border-top-color: currentColor;
  border-bottom: 0;
}
.faded { opacity: .35; }
.x-tabs { display: flex; height: 43px; font-size: 20px; line-height: 44px; }
.x-tabs a { padding: 0 26px; }
.x-tabs .file { padding: 0 43px 0 36px; }
.x-tabs .active { padding: 0 25px 0 26px; background: #f1f1f1; color: #217346; }

.x-ribbon {
  display: flex;
  height: 164px;
  background: #f1f1f1;
  border-bottom: 1px solid #d0d0d0;
  color: #555;
}
.x-group {
  display: flex;
  flex-direction: column;
  margin: 8px 0;
  border-right: 1px solid #d0d0d0;
}
.x-group footer {
  display: flex;
  align-items: center;
  margin: auto 0 -6px;
  font-size: 20px;
  line-height: 24px;
  color: #666;
}
.launch { width: 14px; height: 14px; margin-top: 4px; }
.x-clip { width: 153px; }
.x-clip footer { padding-left: 16px; }
.x-clip .launch { margin-left: auto; margin-right: 6px; }
.x-tools { display: flex; padding: 3px 0 0 23px; }
.x-paste { display: flex; flex-direction: column; align-items: center; width: 50px; color: #444; font-size: 20px; line-height: 24px; height: 105px; padding-top: 3px; }
.x-paste span { margin: 6px 0 0 -6px; }
.x-paste::after { content: ""; margin: 11px 8px 0 0; border: 5px solid transparent; border-top-color: #666; border-bottom: 0; }
.x-side { display: flex; flex-direction: column; gap: 15px; margin-left: 14px; }
.x-side .caret::after { margin-left: 12px; }

.x-font { width: 368px; }
.x-line { display: flex; align-items: center; height: 40px; margin-top: 12px; }
.x-font .x-line { padding-left: 7px; }
.x-select { position: relative; height: 40px; }
.x-select select {
  appearance: none;
  width: 100%;
  height: 40px;
  border: 1px solid #c6c6c6;
  border-radius: 0;
  background: #fff;
  color: #444;
  padding: 0 4px;
  font-size: 20px;
}
.x-select::after, .x-name::after {
  content: "";
  position: absolute;
  right: 8px;
  top: 17px;
  border: 5px solid transparent;
  border-top-color: #666;
  border-bottom: 0;
}
.x-select.name { width: 197px; }
.x-select.size { width: 76px; }
.grow { display: flex; font: bold 24px "Open Sans", sans-serif; margin-left: 11px; }
.grow.small { font-size: 20px; margin-left: 15px; }
.grow svg { margin-top: 3px; }
.x-font .x-style { height: 42px; padding-left: 18px; color: #555; }
.ltr { font: bold 20px "Open Sans", sans-serif; }
.ltr.it { margin-left: 26px; font: italic bold 20px "Liberation Serif", serif; width: 12px; }
.ltr.un { margin-left: 26px; text-decoration: underline; }
.x-style .un::after { margin-left: 18px; }
.bar { width: 1px; height: 38px; margin: 0 14px; background: #d0d0d0; }
.x-style .fc { margin-left: 10px; }
.x-style .fc::after { margin-left: 9px; }
.fc span { display: block; width: 28px; font: bold 24px/22px "Open Sans", sans-serif; border-bottom: 7px solid #f00; }
.x-font footer { padding-left: 148px; }
.x-font .launch { margin-left: auto; margin-right: 7px; }

.x-align { flex: 1; border-right: 0; }
.x-align .x-line { padding-left: 7px; }
.x-align .x-line + .x-line { padding-top: 4px; height: 42px; }
.x-align .x-line button { display: flex; align-items: center; justify-content: center; width: 39px; height: 40px; }
.x-align .x-line button.on { background: #c5c5c5; }
.x-align .x-line button.caret { width: 54px; margin-left: 6px; }
.x-align .x-line button.caret::after { margin-left: 6px; }
.x-align .x-line + .x-line button:nth-child(4) { margin-left: 5px; }
.x-align footer { padding-left: 85px; }
.x-align svg { overflow: visible; }
.ab { font: bold 16px "Open Sans", sans-serif; fill: #555; }

.x-formula { display: flex; align-items: flex-start; height: 118px; padding: 19px 0 0 9px; }
.x-name { position: relative; width: 180px; }
.x-name input { width: 100%; height: 45px; border: 1px solid #c6c6c6; background: #fdfdfd; padding: 0 12px; font-size: 20px; color: #444; }
.x-name::after { right: 12px; top: 18px; border-width: 7px 6px 0; }
.dots { margin: 14px 26px 0; }
.x-fx { display: flex; align-items: center; justify-content: space-between; width: 194px; height: 45px; border: 1px solid #c6c6c6; background: #fdfdfd; padding: 0 24px 0 22px; }
.fx { font: italic bold 24px "Liberation Serif", serif; color: #666; }
.fx sub { font-size: 17px; vertical-align: 0; }
.x-formula textarea { flex: 1; height: 80px; margin-left: 6px; border: 1px solid #c6c6c6; border-right: 0; background: #fdfdfd; resize: none; }

.x-sheet { width: 100%; table-layout: fixed; border-collapse: collapse; background: #fff; font: 22px "Open Sans", sans-serif; color: #111; }
.x-sheet th { background: #e6e6e6; font-weight: normal; height: 35px; padding: 0; line-height: 30px; border-right: 1px solid #b5b5b5; border-bottom: 1px solid #9c9c9c; color: #333; }
.x-sheet th:first-child { width: 45px; border-right-color: #9c9c9c; }
.x-sheet th:nth-child(2) { width: 179px; }
.x-sheet th:nth-child(3) { width: 174px; }
.x-sheet tbody th { border-bottom-color: #c0c0c0; }
.x-sheet td { border: 1px solid #d4d4d4; padding: 0 3px; white-space: nowrap; height: 35px; font-size: 23px; line-height: 30px; }
.x-sheet tbody tr:nth-child(even) td { height: 36px; }
.x-sheet .n { text-align: right; }
.x-sheet td:last-child, .x-sheet th:last-child { border-right: 0; }
.x-sheet .corner { background: linear-gradient(135deg, transparent 50%, #b4b4b4 50%) no-repeat 18px 9px / 21px 21px #e6e6e6; }

/* ---------- Prism windows ---------- */
.prism {
  --ic: 14px;
  --gap: 5px;
  position: relative;
  font-size: 11px;
  color: #8a8a8a;
}
.sheetwin { margin: 40px 42px 0 30px; border-top: 1px solid #c4c4c4; border-right: 1px solid #999; }
.graphwin { --ic: 13px; max-width: 703px; margin: 17px 0 0 278px; overflow: hidden; color: #111; }

.p-title { display: flex; align-items: center; height: 28px; padding-left: 4px; }
.graphwin .p-title { font-family: Roboto, sans-serif; }
.p-title .logo { width: 13px; height: 16px; margin-right: 7px; }
.winctl { display: flex; gap: 34px; margin-left: auto; padding-right: 18px; }
.graphwin .winctl { gap: 31px; padding-right: 15px; }
.p-menu { display: flex; align-items: center; height: 19px; padding-left: 4px; gap: 13px; color: #777; }
.graphwin .p-menu { height: 16px; gap: 12px; color: #111; }
.p-menu .logo { width: 14px; height: 14px; margin-right: -7px; }
.mdi { display: flex; gap: 2px; margin-left: auto; }
.mdi button { width: 17px; height: 17px; background: #ececec; font: bold 11px/16px "DejaVu Sans", sans-serif; color: #8593a3; }
.graphwin .mdi button { height: 15px; }

.p-bar {
  display: flex;
  height: 68px;
  border-top: 1px solid #e6e6e6;
  border-bottom: 1px solid #999;
  background: linear-gradient(#fff, #f2f2f2 40%, #d3d3d3);
  color: #222;
  overflow: hidden;
}
.graphwin .p-bar { height: 65px; }
.g {
  flex-shrink: 0;
  padding: 2px 0 0 6px;
  border-right: 1px solid;
  border-image: linear-gradient(#eee, #a5a5a5) 1;
  margin-bottom: 3px;
}
.g h4 { margin: 0 0 0 -6px; font: 10px/12px "Liberation Sans", sans-serif; text-align: center; color: #222; }
.r { display: flex; align-items: center; gap: var(--gap); height: 18px; margin-top: 2px; }
.r + .r { margin-top: 5px; }
.graphwin .r + .r { margin-top: 2px; }
.tb { display: flex; align-items: center; font-size: 11px; min-width: var(--ic); height: 16px; color: #111; }
.tb svg { width: var(--ic); height: var(--ic); }
.drop::after {
  content: "";
  margin-left: 2px;
  border: 3px solid transparent;
  border-top-color: #111;
  border-bottom: 0;
}
.tb.drop::after { margin-right: -1px; }
.off, .off-in .tb, .off-in .cmb { opacity: .4; }
.big { display: flex; align-items: center; margin-top: 7px; }
.big svg { width: 31px; height: 31px; }
.g-prism .big svg { width: 26px; }
.graphwin .big { margin-top: 4px; }
.graphwin .big svg { width: 22px; height: 28px; }
.ser { justify-content: center; font: bold 12px "Liberation Serif", serif; }
.tt { font-size: 18px; }
.boxed { border: 1px solid #333; }
.ital { font-style: italic; }
.under { text-decoration: underline; }
.num { width: 16px; font: italic bold 9px "Liberation Sans", sans-serif; text-decoration: line-through; }
.cmb { position: relative; display: block; }
.cmb select {
  appearance: none;
  display: block;
  width: 100%;
  height: 19px;
  border: 1px solid #999;
  border-radius: 0;
  background: #fff;
  padding: 0 5px;
  color: #111;
  opacity: 1;
}
.cmb::after {
  content: "";
  position: absolute;
  right: 7px;
  top: 5px;
  width: 5px;
  height: 5px;
  border: solid #555;
  border-width: 0 1px 1px 0;
  transform: rotate(45deg);
}

.g-prism { width: 45px; }
.g-file { width: 54px; }
.g-sheet { width: 92px; }
.g-undo { width: 35px; }
.g-clip { width: 66px; }
.g-ana { width: 102px; padding-left: 5px; }
.g-change { width: 111px; }
.g-import { width: 48px; padding-left: 8px; }
.g-draw { width: 34px; }
.g-write { width: 66px; padding-left: 8px; }
.g-text { width: 217px; --gap: 6px; }
.g-text .cmb { width: 139px; }
.g-text .cmb.s { width: 37px; margin-right: -3px; }
.g-text .cmb + .tb { margin-left: -2px; }
.g-print { width: 28px; }
.g-send { width: 53px; --gap: 4px; }
.spread { gap: 12px; }
.g-arr { width: 46px; padding-left: 14px; }
.g-arr h4 { margin-left: -14px; }
.graphwin .g-prism { width: 44px; }
.graphwin .g-file { width: 50px; }
.graphwin .g-sheet { width: 89px; }
.graphwin .g-undo { width: 33px; }
.graphwin .g-clip { width: 60px; }
.graphwin .g-ana { width: 98px; }
.graphwin .g-change { width: 103px; padding-left: 8px; }
.graphwin .g-draw { width: 33px; }
.graphwin .g-write { width: 62px; }
.brand { margin: 13px 0 0 4px; }
.b1 { font: 8px "Open Sans", sans-serif; fill: #888; }
.b2 { font: 25px "Open Sans", sans-serif; fill: #8a8a8a; }

.p-body { position: relative; display: flex; height: 733px; color: #222; }
.split { width: 5px; flex-shrink: 0; background: #ececec; border: solid #999; border-width: 0 1px; }
.grid { flex: 1; overflow: hidden; min-width: 0; }
.p-sheet { width: 100%; table-layout: fixed; border-collapse: collapse; background: #fff; font: 9px "Liberation Sans", sans-serif; }
.p-sheet th, .p-sheet td { border: 1px solid #a0a0a0; padding: 0 2px; overflow: hidden; white-space: nowrap; line-height: 12px; }
.p-sheet th { background: #efefef; vertical-align: top; color: #111; }
.p-sheet thead tr { height: 17px; }
.p-sheet thead tr:last-child { height: 15px; }
.p-sheet thead tr:last-child th { border-color: #777; }
.p-sheet .ttl { background: #fff; font-weight: normal; vertical-align: middle; }
.p-sheet .gray, .p-sheet .t.gray { color: #888; }
.p-sheet .fmt { background: #dedede; font: 11px/13px "Liberation Sans", sans-serif; vertical-align: middle; }
.p-sheet .fmt b { color: #0000a8; }
.p-sheet .gs { border-left: 3px solid #6a6a6a; }
.p-sheet tbody tr { height: 16px; }
.p-sheet tbody tr:nth-child(8n+1), .p-sheet tbody tr:nth-child(8n+4), .p-sheet tbody tr:nth-child(8n+6) { height: 17px; }
.p-sheet td { text-align: right; }
.p-sheet td.t { text-align: left; padding-left: 3px; }
.p-sheet .pick { background: #a3cff2; }
.p-sheet .cur { outline: 3px solid #2f88d4; outline-offset: -2px; }
.p-sheet .tri { background: linear-gradient(135deg, transparent 50%, #777 50%) no-repeat 19px 4px / 8px 8px #efefef; }
.p-sheet .x { text-align: right; }
.p-sheet .x span { display: inline-block; width: 10px; height: 10px; border: 1px solid #777; background: #fff; line-height: 7px; text-align: center; }

.vs { display: flex; flex-direction: column; width: 15px; flex-shrink: 0; background: #efefef; }
.th { display: block; background: #cdcdcd; }
.vs .th { height: 352px; }
.vs .dn { margin-top: auto; }
.a { position: relative; display: block; width: 15px; height: 16px; flex-shrink: 0; }
.a::before { content: ""; position: absolute; left: 4px; top: 6px; width: 6px; height: 6px; border: solid #555; border-width: 2px 0 0 2px; transform: rotate(45deg); }
.dn::before { transform: rotate(225deg); top: 2px; }
.lf::before { transform: rotate(-45deg); left: 6px; top: 4px; }
.rt::before { transform: rotate(135deg); left: 2px; top: 4px; }
.hs { display: flex; height: 15px; background: #efefef; }
.hs .th { width: 401px; }
.hs span { flex: 1; }
.hs > .a { width: 17px; }
.mini-hs { display: flex; justify-content: space-between; width: 22px; overflow: hidden; background: #fff; }
.mini-hs .a { width: 10px; }
.mini-hs .lf::before { left: 2px; }
.sheetwin .hs { padding-right: 14px; }
.teal { height: 6px; background: linear-gradient(#b5d0d4, #8fc4c8 50%, #3d8e94); }

.p-status {
  display: flex;
  align-items: center;
  height: 31px;
  padding: 0 0 3px 1px;
  background: linear-gradient(90deg, #f6f7fa, #eceef1 30%, #d8d9dd 60%);
  color: #555;
}
.p-status > * { flex-shrink: 0; }
.v { width: 1px; height: 24px; background: #999; }
.st { margin-right: 7px; }
.st svg { width: 17px; height: 17px; }
.blank { width: 95px; }
.sn { display: flex; align-items: center; margin: 0 0 0 8px; }
.sn svg { width: 16px; height: 16px; }
.sn + .v { margin-left: 7px; }
.tabs { display: flex; align-self: flex-start; margin-left: 6px; }
.tabs button { display: flex; justify-content: center; width: 30px; height: 26px; padding-top: 4px; border: 1px solid #888; border-top: 0; border-radius: 0 0 8px 8px; background: #f8f9fb; }
.tabs svg { width: 15px; height: 16px; }
.tabs .on { background: linear-gradient(#c5ecec, #7fcfd2); }
.tabs + .v { margin: 0 2px 0 1px; }
.cmb.sheet { width: 240px; margin-right: 3px; }
.cmb.sheet select { height: 20px; border-color: #777; font: 11px "Open Sans", sans-serif; }
.where { width: 139px; padding-left: 6px; }
.fill { flex: 1; }
.p-status input[type=range] { appearance: none; width: 65px; height: 20px; margin: 0 3px 0 12px; background: linear-gradient(#eee, #eee) no-repeat 0 7px / 100% 2px; }
.p-status input[type=range]::-webkit-slider-thumb { appearance: none; width: 11px; height: 18px; background: #0a78d4; clip-path: polygon(0 0, 100% 0, 100% 70%, 50% 100%, 0 70%); }
.sheetwin .grip { align-self: flex-end; margin: 0 0 -3px -2px; }

/* graph window body */
.graphwin .p-body { height: 459px; }
.stub { width: 7px; background: #fff; }
.vs.left .th { height: 397px; }
.graphwin .vs { width: 14px; }
.canvas + .vs .up { margin-bottom: 99px; }
.canvas + .vs .th { height: 194px; }
.canvas { flex: 1; background: #fff; min-width: 0; }
.chart { margin: 141px 0 0 189px; }
.chart text { font-family: "Liberation Sans", sans-serif; font-weight: bold; }
.chart .ttl { font-size: 22px; }
.chart .pc { font-weight: normal; }
.chart .num { width: auto; text-decoration: none; font-style: normal; }
.chart .num text { font-size: 12px; text-anchor: end; }
.cat text { font-size: 13px; text-anchor: middle; }
.leg text { font-size: 15px; }
.graphwin .hs .th { width: 538px; }
.graphwin .teal { height: 5px; }
.graphwin .mini-hs { width: 21px; }
.graphwin .p-status { padding-left: 4px; background: linear-gradient(90deg, #f6f7fa, #e4e6ea); }
.graphwin .st svg { width: 15px; }
.graphwin .blank { width: 90px; }
.graphwin .sn { margin-left: 7px; }
.graphwin .sn + .v { margin-left: 5px; }
.graphwin .tabs { margin-left: 5px; }
.graphwin .tabs button { width: 28px; }
.graphwin .cmb.sheet { width: 227px; }
.graphwin .fill { flex: 0 0 23px; }
.graphwin .v + .sn:last-of-type { margin-left: 4px; }

/* ---------- Dialog ---------- */
.dlg {
  position: absolute;
  left: 197px;
  top: 136px;
  width: 688px;
  background: #fff;
  border: 1px solid #777;
  box-shadow: 2px 4px 14px rgba(0,0,0,0.4);
  color: #111;
  font: 10px "Liberation Sans", sans-serif;
}
.dlg > header { display: flex; align-items: center; justify-content: space-between; height: 29px; padding: 0 10px 0 8px; font: 11px "Open Sans", sans-serif; }
.dlg-mid { display: flex; height: 468px; }
.side { width: 137px; padding-top: 45px; background: linear-gradient(#1f6c7c, #3a7f80 40%, #3a8277); font: 12px/21px "Open Sans", sans-serif; color: #fff; }
.side h5 { margin: 0; padding-left: 13px; font: 12px/24px "Open Sans", sans-serif; color: #8ff0e0; }
.side h5:first-child { margin: -33px 0 9px; }
.side .low { line-height: 29px; height: 35px; }
.side a { display: block; height: 21px; margin-bottom: 7px; padding-left: 8px; border-radius: 4px 0 0 4px; background: linear-gradient(90deg, #2799ae 55%, #1f7f91); border-bottom: 1px solid #4fb0c0; }
.side .sel { background: #fff; color: #174f5c; font-weight: bold; border: 0; }
.dlg-main { flex: 1; padding: 10px 10px 0 37px; }
.dlg h3 { margin: 0; padding-right: 50px; font: bold 11px/16px "Noto Sans", sans-serif; color: #17727c; }
.demo { display: flex; margin-top: 8px; }
.mini { width: 212px; height: 68px; table-layout: fixed; border-collapse: collapse; font-size: 8px; color: #555; text-align: center; }
.mini td { border: 1px solid #999; padding: 0; line-height: 11px; overflow: hidden; }
.mini .c1 { width: 17px; }
.mini .c2 { width: 36px; }
.mini .h, .mini .tf { background: #e2e2e2; }
.mini b { font-weight: normal; color: #2b2bd0; }
.minichart { margin: 0 0 -4px 18px; }
.minichart text { fill: #444; font-size: 8px; }
.more { display: flex; align-items: center; gap: 5px; margin: 55px 0 0 48px; height: 14px; font: bold 11px "Open Sans", sans-serif; color: #0a14c8; }
.dlg hr { margin: 24px 0 0 -20px; border: 0; border-top: 1px solid #999; }
.opts { display: grid; grid-template-columns: 102px 1fr; column-gap: 7px; margin-top: 13px; }
.opts > b { font: bold 11px/17px "Open Sans", sans-serif; text-align: right; white-space: nowrap; }
.ol label { display: flex; align-items: center; gap: 4px; height: 17px; }
.ol input[type=radio] { appearance: none; width: 12px; height: 12px; margin: 0; border: 1px solid #444; border-radius: 50%; background: #fff; }
.ol input[type=radio]:checked { background: radial-gradient(circle, #222 45%, #fff 50%); }
.wide { display: flex; flex-direction: column; gap: 5px; margin-bottom: 9px; }
.rep { display: flex; align-items: center; height: 17px; }
.rep > label { width: 50px; }
.rep > span:last-child { margin-left: 8px; }
.spin { display: flex; width: 42px; height: 19px; border: 1px solid #888; }
.spin input { width: 25px; border: 0; padding: 0 0 0 1px; color: #fff; font-size: 12px; background: linear-gradient(#0a6cce, #0a6cce) no-repeat 0 1px / 8px 14px #fff; }
.spin > span { display: flex; flex-direction: column; width: 15px; }
.spin button { flex: 1; background: #e8e8e8; border: 1px solid #bbb; }
.spin button::after { content: ""; display: block; width: 0; margin: auto; border: 3px solid transparent; border-bottom-color: #111; border-top: 0; }
.spin button.d::after { transform: rotate(180deg); }
.ol .enter { height: 21px; margin-top: 3px; padding-left: 18px; }
.dd { width: 204px; margin-left: 1px; }
.dd select { height: 21px; background: #e1e1e1; font-size: 11px; padding-left: 3px; }
.dlg > footer { display: flex; align-items: center; gap: 9px; height: 44px; padding: 4px 8px 0 11px; background: #f3f3f3; }
.dlg > footer span { flex: 1; }
.dlg > footer button { width: 71px; height: 20px; border: 1px solid #aaa; background: #e1e1e1; font-size: 11px; }
.dlg > footer .ok { border: 2px solid #0a78d4; }
```

FILE: script.js
```js
const el = (tag, cls, text) => {
  const node = document.createElement(tag);
  if (cls) node.className = cls;
  if (text !== undefined) node.textContent = text;
  return node;
};

// Excel sheet
const excelData = [
  ['Singlets', '94.1'], ['Nucleated cells', '100'], ['Total CD45', '99.6'],
  ['hCD45', '87.4'], ['mCD45', '12.2'], ['hCD14', '1.27'], ['hCD56', '0.13'],
  ['hCD19', '22.4'], ['hCD3', '76.3'], ['hCD4', '83.2'], ['hCD8', '13.6'],
  ['', ''], ['', '']
];
const excelRows = document.getElementById('excelRows');
const first = el('tr');
const wide = el('td', '', 'Percentage of cell population');
wide.colSpan = 3;
first.append(el('th', '', 1), el('td', '', 'Cell population'), wide, el('td'));
excelRows.append(first);
excelData.forEach(([name, value], i) => {
  const tr = el('tr');
  tr.append(el('th', '', i + 2), el('td', '', name), el('td', 'n', value), el('td'), el('td'), el('td'));
  excelRows.append(tr);
});

// Prism data table
const groups = { A: 'CD4', B: 'CD8', C: 'CD19', D: 'Title', E: 'Title' };
const prismData = [
  '88.20 85.50 73.4 61.70 8.13 7.71 12.90 33.10 1.710 5.75 8.78 0.36',
  '81.60 89.40 76.5 86.00 10.70 4.22 15.20 9.32 5.440 4.71 4.36 1.49',
  '92.10 62.90 78.9 77.40 6.79 27.80 16.50 15.70 0.400 4.49 0.36 0.20',
  '68.20 70.90 77.9 54.70 25.40 18.10 14.00 32.60 4.380 7.74 6.99 1.41'
].map(line => line.split(' '));

const cols = document.getElementById('prismCols');
for (let i = 0; i < 23; i++) {
  const col = el('col');
  if (i === 0) col.style.width = '31px';
  if (i === 1) col.style.width = '56px';
  if (i === 22) col.style.width = '10px';
  cols.append(col);
}

const head = document.getElementById('prismHead');
const rows = [el('tr'), el('tr'), el('tr')];
const fmt = el('th', 'fmt');
fmt.colSpan = 2;
fmt.rowSpan = 2;
fmt.innerHTML = '<span>Table format:</span><br><b>Grouped</b>';
rows[0].append(fmt);
const x = el('th', 'x');
x.append(el('span', '', '×'));
rows[2].append(el('th', 'tri'), x);
Object.entries(groups).forEach(([key, title]) => {
  const a = el('th', 'gs', 'Group ' + key);
  const b = el('th', 'gs ttl' + (title === 'Title' ? ' gray' : ''), title);
  a.colSpan = b.colSpan = 4;
  rows[0].append(a);
  rows[1].append(b);
  for (let y = 1; y <= 4; y++) {
    rows[2].append(el('th', (y === 1 ? 'gs' : '') + (key + y === 'A1' ? ' pick' : ''), key + ':Y' + y));
  }
});
rows[0].append(el('th', 'gs'));
rows[1].append(el('th', 'gs ttl'));
rows[2].append(el('th', 'gs'));
head.append(...rows);

const body = document.getElementById('prismRows');
for (let r = 0; r < 42; r++) {
  const tr = el('tr');
  const data = prismData[r];
  tr.append(el('th', r === 7 ? 'pick' : '', r + 1));
  tr.append(el('td', data ? 't' : 't gray', data ? 'MS' + (r + 1) : 'Title'));
  for (let c = 0; c < 21; c++) {
    tr.append(el('td', (c % 4 === 0 ? 'gs' : '') + (r === 7 && c === 0 ? ' cur' : ''), data ? data[c] || '' : ''));
  }
  body.append(tr);
}
```
